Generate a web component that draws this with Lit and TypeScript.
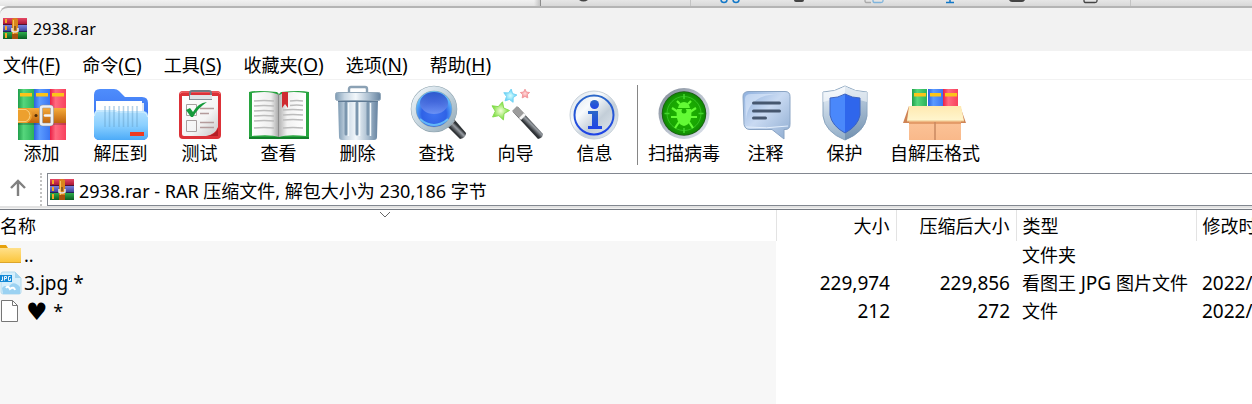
import { LitElement, html, css, svg, nothing } from "lit";
import { customElement } from "lit/decorators.js";

const star = (x: number, y: number, r: number, turn = -90) => {
  const pts: string[] = [];
  for (let i = 0; i < 10; i++) {
    const a = ((turn + i * 36) * Math.PI) / 180;
    const q = i % 2 ? r * 0.5 : r;
    pts.push(`${(x + q * Math.cos(a)).toFixed(1)},${(y + q * Math.sin(a)).toFixed(1)}`);
  }
  return pts.join(" ");
};

const defs = svg`<defs>
  <linearGradient id="green"><stop offset="0" stop-color="#1f9e4a"/><stop offset=".35" stop-color="#56d67c"/><stop offset="1" stop-color="#2cb35a"/></linearGradient>
  <linearGradient id="blue"><stop offset="0" stop-color="#2c62de"/><stop offset=".35" stop-color="#5b9bff"/><stop offset="1" stop-color="#3a76f2"/></linearGradient>
  <linearGradient id="red"><stop offset="0" stop-color="#ea1f45"/><stop offset=".35" stop-color="#ff6a80"/><stop offset="1" stop-color="#f8405c"/></linearGradient>
  <linearGradient id="belt" x2="0" y2="1"><stop offset="0" stop-color="#f6ab3a"/><stop offset="1" stop-color="#c0640c"/></linearGradient>
  <linearGradient id="folderBack" x2="0" y2="1"><stop offset="0" stop-color="#4f8dfc"/><stop offset="1" stop-color="#2c63e8"/></linearGradient>
  <linearGradient id="folderFront" x2="0" y2="1"><stop offset="0" stop-color="#b5e2ff"/><stop offset=".5" stop-color="#8bd0ff"/><stop offset="1" stop-color="#4cabf8"/></linearGradient>
  <linearGradient id="paper" x2="1" y2="1"><stop offset="0" stop-color="#ffffff"/><stop offset=".6" stop-color="#f4f4f4"/><stop offset="1" stop-color="#c6c6c6"/></linearGradient>
  <linearGradient id="pageL"><stop offset="0" stop-color="#ffffff"/><stop offset=".7" stop-color="#eeeeee"/><stop offset="1" stop-color="#a6a6a6"/></linearGradient>
  <linearGradient id="pageR"><stop offset="0" stop-color="#b4b4b4"/><stop offset=".3" stop-color="#f2f2f2"/><stop offset="1" stop-color="#ffffff"/></linearGradient>
  <linearGradient id="can"><stop offset="0" stop-color="#7f9cb4"/><stop offset=".2" stop-color="#c6d5e2"/><stop offset=".45" stop-color="#f2f7fb"/><stop offset=".75" stop-color="#a9bdcf"/><stop offset="1" stop-color="#6683a0"/></linearGradient>
  <linearGradient id="rim" x2="1" y2="1"><stop offset="0" stop-color="#f0f6fa"/><stop offset=".5" stop-color="#c4d4de"/><stop offset="1" stop-color="#93a9b6"/></linearGradient>
  <radialGradient id="lens" cy=".62"><stop offset="0" stop-color="#3f74f2"/><stop offset=".6" stop-color="#2f62e6"/><stop offset="1" stop-color="#63c3ff"/></radialGradient>
  <linearGradient id="gloss" x2="0" y2="1"><stop offset="0" stop-color="#2344c4"/><stop offset="1" stop-color="#7397f5"/></linearGradient>
  <linearGradient id="handle" gradientUnits="userSpaceOnUse" x1="40" y1="45" x2="49" y2="36"><stop offset="0" stop-color="#101214"/><stop offset=".5" stop-color="#33373b"/><stop offset=".8" stop-color="#9a9fa5"/><stop offset="1" stop-color="#303437"/></linearGradient>
  <radialGradient id="starG"><stop offset="0" stop-color="#f2ffd8"/><stop offset="1" stop-color="#78dc38"/></radialGradient>
  <radialGradient id="starB"><stop offset="0" stop-color="#d6ffff"/><stop offset="1" stop-color="#5fcdf5"/></radialGradient>
  <radialGradient id="starR"><stop offset="0" stop-color="#ffdcdc"/><stop offset="1" stop-color="#f58a90"/></radialGradient>
  <linearGradient id="disc" x2="1" y2="1"><stop offset="0" stop-color="#d7e0e8"/><stop offset=".35" stop-color="#f8fbfd"/><stop offset=".6" stop-color="#c3ced8"/><stop offset="1" stop-color="#e9eff4"/></linearGradient>
  <linearGradient id="info" x2="0" y2="1"><stop offset="0" stop-color="#2b67c8"/><stop offset="1" stop-color="#1f44e6"/></linearGradient>
  <linearGradient id="ring" x2="1" y2="1"><stop offset="0" stop-color="#7c8592"/><stop offset=".5" stop-color="#b8c0cc"/><stop offset="1" stop-color="#dfe5ee"/></linearGradient>
  <radialGradient id="radar"><stop offset="0" stop-color="#1fb800"/><stop offset=".75" stop-color="#18a402"/><stop offset="1" stop-color="#108604"/></radialGradient>
  <linearGradient id="bubble" x2="1" y2="1"><stop offset="0" stop-color="#8eb0de"/><stop offset=".45" stop-color="#c9daf2"/><stop offset="1" stop-color="#8dabd0"/></linearGradient>
  <linearGradient id="shield" x2="0" y2="1"><stop offset="0" stop-color="#eef4fa"/><stop offset="1" stop-color="#92aec8"/></linearGradient>
  <linearGradient id="shieldDark" x2="0" y2="1"><stop offset="0" stop-color="#b5c9dc"/><stop offset="1" stop-color="#6484a6"/></linearGradient>
  <linearGradient id="flap" x2="0" y2="1"><stop offset="0" stop-color="#ffe9b0"/><stop offset="1" stop-color="#fff6cf"/></linearGradient>
  <linearGradient id="box" x2="0" y2="1"><stop offset="0" stop-color="#e59a62"/><stop offset=".3" stop-color="#fbc195"/><stop offset="1" stop-color="#f9b98a"/></linearGradient>
  <linearGradient id="yellow" x2="0" y2="1"><stop offset="0" stop-color="#ffe08a"/><stop offset="1" stop-color="#fbc437"/></linearGradient>
  <linearGradient id="barR" x2="0" y2="1"><stop offset="0" stop-color="#e64864"/><stop offset="1" stop-color="#a01030"/></linearGradient>
  <linearGradient id="barB" x2="0" y2="1"><stop offset="0" stop-color="#7a84e0"/><stop offset="1" stop-color="#34388e"/></linearGradient>
  <linearGradient id="barG" x2="0" y2="1"><stop offset="0" stop-color="#2fae4c"/><stop offset="1" stop-color="#0a5c22"/></linearGradient>
</defs>`;

const icons: Record<string, unknown> = {
  add: svg`
    <rect x="8" y="3" width="16" height="51" fill="url(#green)"/><rect x="24" y="3" width="16" height="51" fill="url(#blue)"/><rect x="40" y="3" width="16" height="51" fill="url(#red)"/>
    <path d="M10 7h12v3.500H10zM26 7h12v3.500H26zM42 7h12v3.500H42z" fill="#fcc419"/>
    <path d="M8 22h48v15H8z" fill="url(#belt)"/><path d="M8 22h9q5 3 5 7.500T17 37H8z" fill="#eda02e"/><path d="M8 23.500h8q4 2 4 6t-4 6H8" fill="none" stroke="#f9cd7c"/>
    <path d="M8 37h48v2H8z" fill="#000" opacity=".2"/><circle cx="26" cy="29.500" r="1.500" fill="#4a2a06"/>
    <rect x="31" y="20.500" width="11" height="18" rx="2" fill="none" stroke="#8a8d92" stroke-width="3.600"/><rect x="31" y="20.500" width="11" height="18" rx="2" fill="none" stroke="#eceef1" stroke-width="2.600"/>
    <path d="M35 29.500h6" stroke="#f4f5f7" stroke-width="2.400" stroke-linecap="round"/>`,
  extract: svg`
    <path d="M5 9q0-6 6-6h14q3 0 5 2l6 6h17q6 0 6 6v31q0 6-6 6H11q-6 0-6-6z" fill="url(#folderBack)"/>
    <path d="M50 17h5v20h-5z" fill="#dfe8f5"/><path d="M7 15h46v20H7z" fill="#fff"/>
    <path d="M5 29q0-5 5-5h15l4 1h24q6 0 6 5v18q0 6-6 6H11q-6 0-6-6z" fill="url(#folderFront)"/>
    <path d="M5.500 30q0-5 5-5H25l4 1h23q6 0 6.500 5" fill="none" stroke="#d8f1ff"/>
    <path d="M16 20v21M20.500 20v21M25 20v21M30 20v21M34.500 20v21M39 20v21M43.500 20v21M48 20v21" stroke="#6ba5cf" stroke-width="1.500" opacity=".5"/>
    <path d="M41 46h14v4H41z" fill="#ee3a21"/>`,
  test: svg`
    <rect x="11" y="5" width="42" height="48" rx="4" fill="#dc3138"/><path d="M12 8q0-2 3-2h34q3 0 3 2" stroke="#f57b7c" fill="none"/>
    <path d="M14 10h36v31q-3 8-12 9H16q-2 0-2-2z" fill="url(#paper)"/><path d="M50 42v8H40q8-2 10-8" fill="#b51f26"/>
    <path d="M22 14V7q0-2 2-2h17q2 0 2 2v7" fill="none" stroke="#727b83" stroke-width="2"/><path d="M22 11h22" stroke="#dfe3e6" stroke-width="4"/><path d="M22 13.500h22" stroke="#8a9299"/>
    <path d="M18.500 18.500h10v11h-10zM18.500 34.500h10v11h-10z" fill="none" stroke="#a8a0a0"/>
    <path d="M32 22.500h14M32 27.500h9M32 36.500h14M32 41.500h14" stroke="#b49c9c" stroke-width="1.500"/>
    <path d="M18 24l4-2 3 4q5-9 14-10-9 6-14 15h-2z" fill="#159a3b"/>`,
  view: svg`
    <path d="M2 6q8-2 28 0l2 2 2-2q20-2 28 0v47H2z" fill="#27a43f"/><path d="M2 51h60v2H2z" fill="#12802a"/>
    <path d="M5 7q18-3 27 2v42q-9-3-27-1z" fill="url(#pageL)"/><path d="M59 7q-18-3-27 2v42q9-3 27-1z" fill="url(#pageR)"/><path d="M31.500 8v43" stroke="#8c8c8c"/>
    <path d="M7 15q10-1 20 0M7 20q10-1 20 0M7 25q10-1 20 0M7 30q10-1 20 0M7 35q10-1 20 0M7 42q10-1 20 0M36 24q10-1 20 0M43 15q7-1 13 0M43 19.500q7-1 13 0M36 29q10-1 20 0M36 34q10-1 20 0M36 42q10-1 20 0" stroke="#bcbcbc" stroke-width="1.500" fill="none"/>
    <path d="M35 6h6v16l-3-4-3 4z" fill="#cf2a30"/>`,
  delete: svg`
    <path d="M23 7V3q0-2 2-2h14q2 0 2 2v4" fill="none" stroke="#8ba1b4" stroke-width="2.400"/>
    <path d="M12 13h40l-1 38q0 3-3 3H16q-3 0-3-3z" fill="url(#can)"/>
    <path d="M20 17v31M31 17v31M42 17v31" stroke="#7b96ae" stroke-width="3" stroke-linecap="round"/><path d="M22.500 17v33M33.500 17v33M44.500 17v33" stroke="#f4f9fc" stroke-width="1.500"/>
    <rect x="9.500" y="6.500" width="45" height="8" rx="2" fill="url(#can)" stroke="#93a8ba"/><path d="M12 15.500h40" stroke="#5f7a94"/>`,
  find: svg`
    <path d="M42 40l7-7 12 14q0 5-6 6z" fill="url(#handle)"/><path d="M41 38l6-6 3 3-6 6z" fill="#c3ccd3"/>
    <circle cx="29" cy="23" r="20.500" fill="url(#lens)" stroke="#8fa3ae" stroke-width="5.500"/><circle cx="29" cy="23" r="20.500" fill="none" stroke="url(#rim)" stroke-width="4.500"/>
    <ellipse cx="29" cy="17" rx="14" ry="11" fill="url(#gloss)" opacity=".85"/><path d="M15 33q14 12 28 0" fill="none" stroke="#79dcff" stroke-width="2" opacity=".7"/>`,
  wizard: svg`
    <path d="M29 26l5-5 25 27q0 4-5 5z" fill="url(#handle)"/><path d="M28 25l5-5 8 8-5 5z" fill="#9c9c9c"/><path d="M35 32l5-5 2 2-5 5z" fill="#f6f6f6"/>
    <polygon points=${star(16, 25, 9.5, -75)} fill="url(#starG)" stroke="#85dc50"/><polygon points=${star(26, 10, 7, -80)} fill="url(#starB)" stroke="#74d4f4"/><polygon points=${star(41, 8, 4.8)} fill="url(#starR)" stroke="#f29a9e"/>`,
  info: svg`
    <circle cx="31" cy="29" r="24" fill="url(#disc)" stroke="#c8d1d9"/><circle cx="31" cy="29" r="19.500" fill="none" stroke="url(#info)" stroke-width="2"/>
    <circle cx="31.500" cy="18.500" r="4.500" fill="url(#info)"/><path d="M25 25h10v15h4v3H25v-3h4V28h-4z" fill="url(#info)"/>`,
  scan: svg`
    <circle cx="32" cy="27.500" r="25.500" fill="url(#ring)"/><circle cx="32" cy="27.500" r="22.300" fill="#1d5a16"/><circle cx="32" cy="27.500" r="21.500" fill="url(#radar)"/>
    <circle cx="32" cy="27.500" r="17" fill="none" stroke="#3cc82a" opacity=".8"/><path d="M32 8v5M32 42v5M12.500 27.500h5M46.500 27.500h5" stroke="#43d62e" stroke-width="1.500"/>
    <path d="M26 22q1-6 6-6t6 6zM25 23h14q2 15-7 17-9-2-7-17" fill="#63fa35"/><circle cx="32" cy="25" r="2.500" fill="#1aac00"/>
    <path d="M28 18l-3-3M36 18l3-3M26 26l-6-4M38 26l6-4M25 31h-6M39 31h6M27 36l-4 6M37 36l4 6" stroke="#63fa35" stroke-width="2.200"/>`,
  comment: svg`
    <path d="M15 5.500h36q5 0 5 5v28q0 5-5 5h-1V53L38 43.500H16q-5 0-6-5l-1-28q0-5 6-5z" fill="url(#bubble)" stroke="#8aa4c4"/>
    <path d="M12 34q2-25 32-26H17q-6 0-6 5z" fill="#e8f2ff" opacity=".5"/><path d="M12 41q20 2 42-1" stroke="#e4effc" fill="none"/>
    <path d="M19.500 17h26M19.500 25h26M19.500 32h12" stroke="#46576f" stroke-width="3" stroke-linecap="round"/>`,
  protect: svg`
    <path d="M32 0q10 6 22 6v24q-2 16-22 24Q12 46 10 30V6q12 0 22-6z" fill="url(#shield)" stroke="#8ba5bf"/><path d="M32 0q10 6 22 6v24q-2 16-22 24z" fill="url(#shieldDark)" opacity=".7"/>
    <path d="M10 6q12 0 22-6 10 6 22 6v10L32 10 10 16z" fill="#fff" opacity=".5"/>
    <path d="M32 8q7 4 15 4v17q-2 11-15 18Q19 40 17 29V12q8 0 15-4z" fill="#4a88fb"/><path d="M32 8q7 4 15 4v17q-2 11-15 18z" fill="#2f66ec"/><path d="M32 8q7 4 15 4v17q-2 11-15 18Q19 40 17 29V12q8 0 15-4z" fill="none" stroke="#3d64c0"/>`,
  sfx: svg`
    <rect x="9" y="3" width="15" height="20" fill="url(#green)"/><rect x="25" y="3" width="15" height="20" fill="url(#blue)"/><rect x="40" y="3" width="15" height="20" fill="url(#red)"/>
    <path d="M11 7h12v3.500H11zM27 7h11v3.500H27zM42 7h12v3.500H42z" fill="#fcc419"/>
    <path d="M6 20l-6 17h7zM57 20l6 17h-7z" fill="#cf8455"/><path d="M6 32h52v22H6z" fill="url(#box)"/><path d="M6 36h52v2H6z" fill="#d98b55" opacity=".6"/>
    <path d="M32 36v18" stroke="#c98961" stroke-width="1.500"/><path d="M6 20h52l3 15H4z" fill="url(#flap)"/><path d="M4 35h57" stroke="#edc58b"/>`,
};

const icon = (name: string) => html`<svg class="tool-icon" viewBox="0 0 64 56" aria-hidden="true">${icons[name]}</svg>`;

const rarIcon = (size: string) => html`<svg class=${size} viewBox="0 0 24 21" aria-hidden="true">
  <rect width="24" height="7" fill="url(#barR)"/><rect y="7" width="24" height="7" fill="url(#barB)"/><rect y="14" width="24" height="7" fill="url(#barG)"/>
  <path d="M0 6.500h24M0 13.500h24" stroke="#1b1230" opacity=".6"/><path d="M2 1h2v4H2zM2 8h2v4H2zM2 15h2v5H2z" fill="#f5a623"/>
  <path d="M9 1q3-2 6 0v20H9z" fill="#d9861c"/><path d="M10.500 2v18" stroke="#f8c35b"/><path d="M9 16h6v5H9z" fill="#a8520c"/>
  <path d="M9 10v3q3 2 6 0v-3" fill="none" stroke="#e9e4dc" stroke-width="1.600"/><path d="M12 8v4" stroke="#6b4a20" stroke-width="1.400"/>
</svg>`;

const fileIcons: Record<string, unknown> = {
  folder: svg`<path d="M-2 2h8l2 3h13v6H-2z" fill="#e6a10c"/><path d="M-2 5h23v15H-2z" fill="url(#yellow)"/><path d="M-2 19.500h23" stroke="#dca52a"/>`,
  jpg: svg`<path d="M3 1h12l6 6v14q0 2-2 2H3q-2 0-2-2V3q0-2 2-2z" fill="#d5eefb" stroke="#b4daed"/><path d="M15 1l6 6h-6z" fill="#a4d4ee"/>
    <path d="M2 17q3-4 6 0 5-9 12-1v7H3z" fill="#9bd2f2"/><path d="M6 17q2-3 4 1 4-3 5 1" fill="none" stroke="#fff" stroke-width="2"/>
    <path d="M0 4h12v7H0z" fill="#1489d6"/><path d="M2.500 5.500v4H1M4.500 9.500v-4h2v2h-2M10.500 5.500h-2v4h2v-2" fill="none" stroke="#fff" stroke-width=".9"/>`,
  file: svg`<path d="M1.500 1.500h11l5 5v16h-16z" fill="#fff" stroke="#767676"/><path d="M12.500 1.500v5h5" fill="none" stroke="#767676"/>`,
};

const menus = [["文件", "F"], ["命令", "C"], ["工具", "S"], ["收藏夹", "O"], ["选项", "N"], ["帮助", "H"]];
const mainTools = [["add", "添加"], ["extract", "解压到"], ["test", "测试"], ["view", "查看"], ["delete", "删除"], ["find", "查找"], ["wizard", "向导"], ["info", "信息"]];
const moreTools = [["scan", "扫描病毒"], ["comment", "注释"], ["protect", "保护"], ["sfx", "自解压格式"]];

const tool = ([name, label]: string[]) => html`<button class="tool" type="button">${icon(name)}<span>${label}</span></button>`;

@customElement("app-root")
export class AppRoot extends LitElement {
  static styles = css`
    :host {
      display: flex;
      flex-direction: column;
      min-height: 100vh;
      overflow: hidden;
      background: #fff;
      color: #000;
      font: 18px/24px "Noto Sans", "Noto Sans CJK SC", sans-serif;
    }
    * { box-sizing: border-box; }
    button, input { font: inherit; color: inherit; }
    button { background: none; border: 0; padding: 0; margin: 0; }
    .defs { position: absolute; width: 0; height: 0; }
    .latin { font-size: 19px; }
    .behind { display: flex; height: 6px; background: linear-gradient(#f1f1f1, #e3e3e3); }
    .behind-left { flex: 0 0 534px; }
    .behind-shade { flex: 0 0 6px; background: linear-gradient(90deg, transparent, #c4c4c4); }
    .behind-right { flex: 1; display: flex; border-left: 1px solid #8c8c8c; background: linear-gradient(#e6e6e6, #d8d8d8); overflow: hidden; }
    .behind-icons { width: 712px; height: 6px; flex: none; }
    .window { flex: 1; display: flex; flex-direction: column; border-top: 2px solid #b4b4b4; border-top-left-radius: 8px; background: #f2f2f2; }
    .title { display: flex; align-items: center; gap: 6px; height: 43px; padding: 0 0 2px 3px; font-size: 16px; }
    .title h1 { margin: 0; font: inherit; }
    .app-icon { width: 24px; height: 21px; }
    .menu { display: flex; align-items: center; gap: 22px; height: 29px; padding-left: 3px; background: #fff; border-bottom: 1px solid #f2f2f2; white-space: nowrap; }
    .menu u { text-underline-offset: 2px; text-decoration-thickness: 1px; }
    .tools { display: flex; height: 90px; padding: 5px 0 5px 2px; background: #fff; overflow: hidden; }
    .tool { display: flex; flex-direction: column; align-items: center; flex: none; min-width: 79px; padding: 1px 6px 0; line-height: 22px; white-space: nowrap; }
    .tool-icon { width: 64px; height: 56px; display: block; overflow: visible; }
    .rule { flex: none; width: 1px; margin: 0 4px 0 3px; background: #868686; }
    .place { display: flex; align-items: center; height: 38px; padding-top: 3px; background: #fff; border-bottom: 2px solid #e2e2e2; }
    .up { flex: none; width: 40px; height: 32px; display: grid; place-items: center; padding: 0 4px 4px 0; }
    .up svg { width: 18px; height: 18px; }
    .grip { flex: none; align-self: stretch; border-left: 2px dotted #c2c2c2; margin-right: 5px; }
    .address { flex: 1; display: flex; align-items: center; gap: 5px; height: 33px; min-width: 0; padding-left: 2px; border: 1px solid #828790; border-right: 0; }
    .rar { flex: none; width: 24px; height: 21px; }
    .address input { flex: 1; min-width: 0; height: 30px; padding: 0; border: 0; outline: 0; background: none; }
    .list { flex: 1; display: flex; flex-direction: column; position: relative; border-top: 1px solid #767b83; background: #fff; margin-top: 1px; }
    .sort { position: absolute; left: 379px; top: 1px; width: 12px; height: 7px; }
    table { flex: none; width: 1376px; table-layout: fixed; border-collapse: collapse; }
    th, td { padding: 0 6px; font-weight: 400; text-align: left; white-space: nowrap; }
    th { height: 31px; border-right: 1px solid #e3e3e3; }
    td { height: 28px; }
    .c-name { width: 776px; }
    .c-size { width: 120px; }
    .c-type { width: 180px; }
    th.name, td.name { padding-left: 0; }
    td.name { background: #f7f7f7; }
    .num { text-align: right; }
    td.num, td.date { font-size: 19px; }
    .entry { display: flex; align-items: center; gap: 2px; height: 28px; }
    .entry svg { width: 22px; height: 24px; flex: none; }
    .heart { font: 24px/24px "DejaVu Sans", sans-serif; vertical-align: -2px; padding: 0 1px 0 2px; }
    .rest { flex: 1; width: 776px; background: #f7f7f7; }
  `;

  private row(kind: string, name: unknown, size: string, packed: string, type: unknown, date: string) {
    return html`<tr>
      <td class="name"><div class="entry"><svg viewBox="0 0 22 24" aria-hidden="true">${fileIcons[kind]}</svg><span>${name}</span></div></td>
      <td class="num">${size}</td><td class="num">${packed}</td><td>${type}</td><td class="date">${date || nothing}</td>
    </tr>`;
  }

  render() {
    return html`
      <svg class="defs" aria-hidden="true">${defs}</svg>
      <div class="behind">
        <div class="behind-left"></div>
        <div class="behind-shade"></div>
        <div class="behind-right">
          <svg class="behind-icons" viewBox="0 0 712 6" aria-hidden="true">
            <path d="M149.500 0v6M589.500 0v6" stroke="#c4c4c4"/>
            <path d="M38 0h9q-4.500 3-9 0M253 0h10q0 2-2 2h-6q-2 0-2-2M468 0h16q-1 2-3 2h-10q-2 0-3-2" fill="#444"/>
            <circle cx="183" cy="-.5" r="3" fill="none" stroke="#1278c8" stroke-width="1.500"/><circle cx="195" cy="-.5" r="3" fill="none" stroke="#1278c8" stroke-width="1.500"/>
            <path d="M324 0v1q0 1.500 2 1.500h4" fill="none" stroke="#aaa" stroke-width="1.300"/>
            <path d="M332 0v1q0 1.500 2 1.500h6q2 0 2-1.500V0" fill="none" stroke="#7fb4dc" stroke-width="1.300"/>
            <path d="M409 0v2.500M405 2.500h8" stroke="#1278c8" stroke-width="1.500"/>
            <path d="M543 0v1q0 1.500 2 1.500h9q2 0 2-1.500V0" fill="none" stroke="#444" stroke-width="1.300"/>
          </svg>
        </div>
      </div>
      <main class="window">
        <header class="title">${rarIcon("app-icon")}<h1>2938.rar</h1></header>
        <nav class="menu">
          ${menus.map(([t, k]) => html`<button type="button">${t}<span class="latin">(<u>${k}</u>)</span></button>`)}
        </nav>
        <div class="tools" role="toolbar">${mainTools.map(tool)}<div class="rule"></div>${moreTools.map(tool)}</div>
        <div class="place">
          <button class="up" type="button" aria-label="向上"><svg viewBox="0 0 18 18"><path d="M9 17V2M2 9l7-7 7 7" fill="none" stroke="#808080" stroke-width="2.400"/></svg></button>
          <div class="grip"></div>
          <label class="address">${rarIcon("rar")}<input type="text" aria-label="地址" value="2938.rar - RAR 压缩文件, 解包大小为 230,186 字节" /></label>
        </div>
        <section class="list">
          <svg class="sort" viewBox="0 0 12 7" aria-hidden="true"><path d="M1 1l5 5 5-5" fill="none" stroke="#666"/></svg>
          <table>
            <colgroup><col class="c-name" /><col class="c-size" /><col class="c-size" /><col class="c-type" /><col class="c-type" /></colgroup>
            <thead><tr><th class="name">名称</th><th class="num">大小</th><th class="num">压缩后大小</th><th>类型</th><th>修改时间</th></tr></thead>
            <tbody>
              ${this.row("folder", "..", "", "", "文件夹", "")}
              ${this.row("jpg", html`<span class="latin">3.jpg *</span>`, "229,974", "229,856", html`看图王 <span class="latin">JPG</span> 图片文件`, "2022/")}
              ${this.row("file", html`<span class="heart">♥</span> *`, "212", "272", "文件", "2022/")}
            </tbody>
          </table>
          <div class="rest"></div>
        </section>
      </main>`;
  }
}
